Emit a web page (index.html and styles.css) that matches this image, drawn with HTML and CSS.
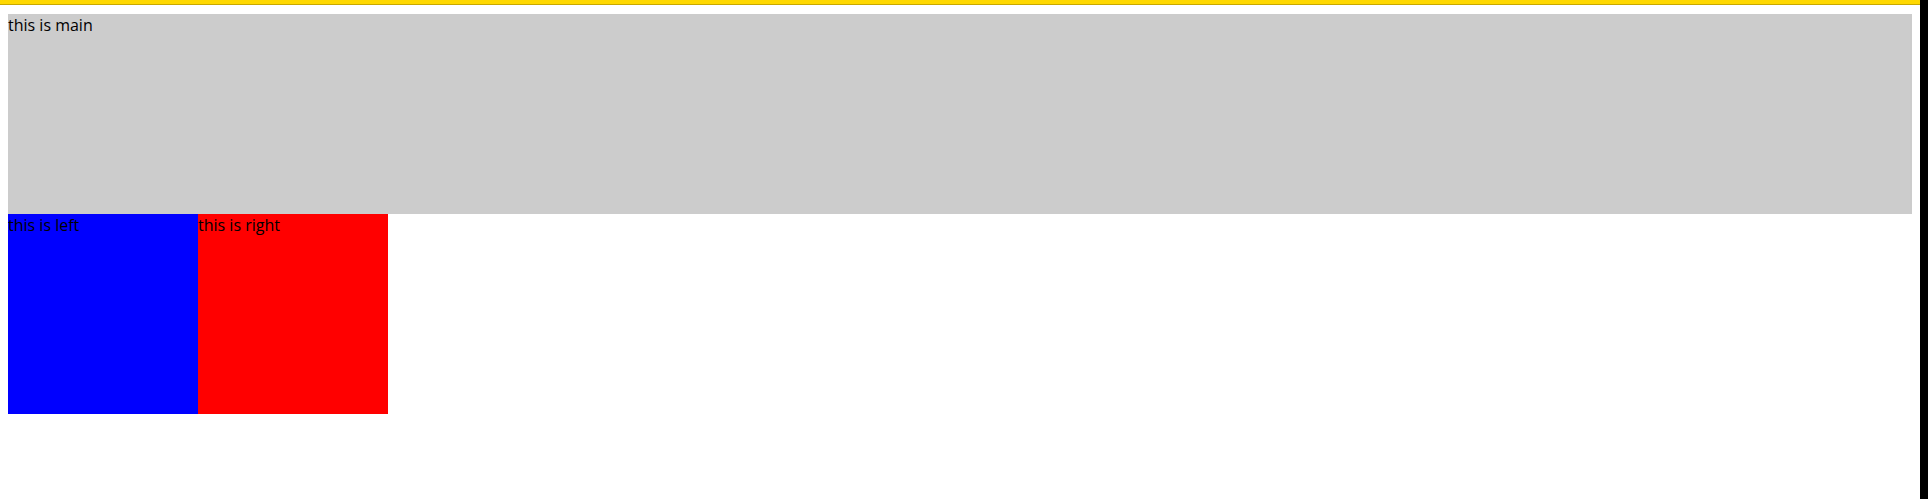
FILE: index.html
```html
<!DOCTYPE html>
<html>
<head>
<meta charset="utf-8">
<link rel="stylesheet" href="styles.css">
</head>
<body>
<div class="page">
  <div class="content">
    <div class="topbar"></div>
    <div class="inner">
      <div class="main">this is main</div>
      <div class="row">
        <div class="left">this is left</div>
        <div class="right">this is right</div>
      </div>
    </div>
  </div>
  <div class="edge"></div>
</div>
</body>
</html>
```
FILE: styles.css
```css
html, body {
  margin: 0;
  padding: 0;
  height: 100%;
  background: #fff;
}
body {
  font-family: "Open Sans", "Noto Sans", sans-serif;
  font-size: 16px;
  line-height: 22px;
  color: #000;
}
.page {
  display: flex;
  height: 100%;
}
.content {
  flex: 1;
  display: flex;
  flex-direction: column;
}
.edge {
  width: 8px;
  background: #000;
}
.topbar {
  height: 4px;
  background: #ffd800;
  border-bottom: 1px solid #c8a800;
}
.inner {
  padding: 9px 8px 0;
}
.main {
  height: 200px;
  background: #ccc;
}
.row {
  display: flex;
}
.left, .right {
  width: 190px;
  height: 200px;
}
.left { background: #00f; }
.right { background: #f00; }
```
